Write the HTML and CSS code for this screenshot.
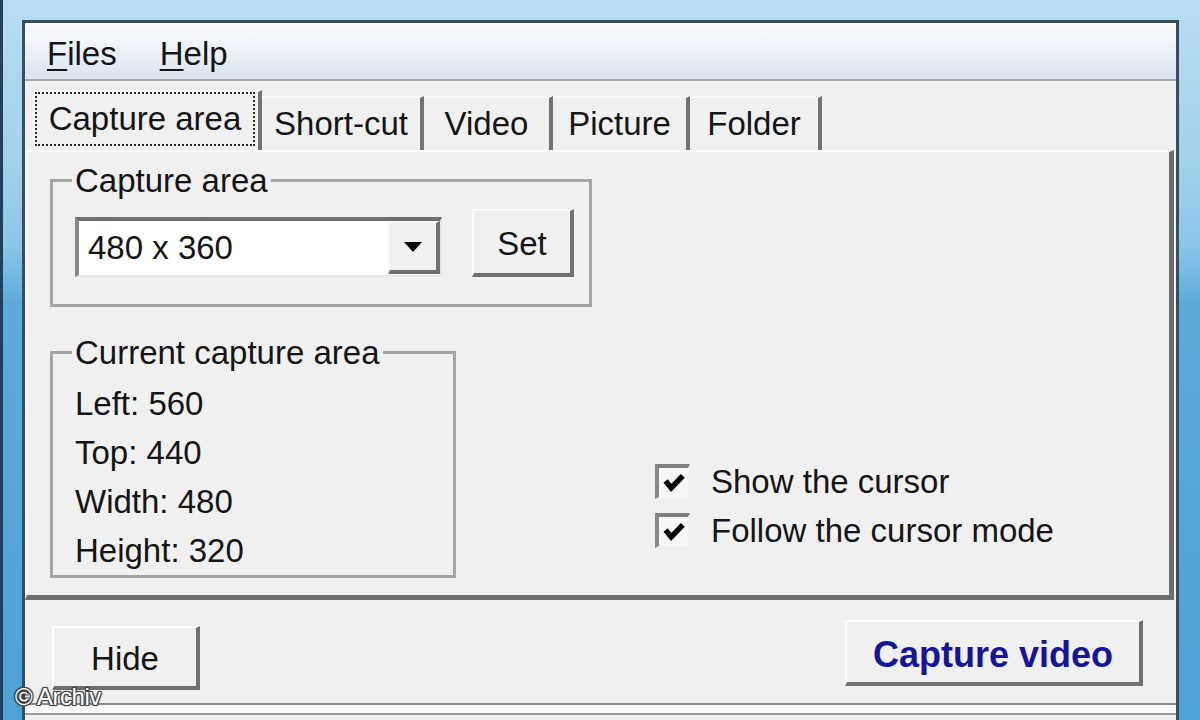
FILE: index.html
```html
<!DOCTYPE html>
<html>
<head>
  <meta charset="UTF-8">
  <title>Capture video</title>
  <link rel="stylesheet" href="styles.css">
</head>
<body>
  <div class="frame">
    <div class="window">
      <!-- 메뉴 -->
      <div class="menubar">
        <span class="menu"><u>F</u>iles</span>
        <span class="menu"><u>H</u>elp</span>
      </div>

      <!-- 탭 -->
      <div class="tabs">
        <div class="tab active"><span class="focus">Capture area</span></div>
        <div class="tab">Short-cut</div>
        <div class="tab">Video</div>
        <div class="tab">Picture</div>
        <div class="tab">Folder</div>
      </div>

      <div class="panel">
        <fieldset class="group group-area">
          <legend>Capture area</legend>
          <div class="area-row">
            <div class="combo">
              <span class="combo-value">480 x 360</span>
              <span class="combo-arrow">
                <svg width="18" height="10" viewBox="0 0 18 10"><path d="M0 0h18L9 10z" fill="#000"/></svg>
              </span>
            </div>
            <button class="btn btn-set">Set</button>
          </div>
        </fieldset>

        <div class="panel-bottom">
          <fieldset class="group group-current">
            <legend>Current capture area</legend>
            <div class="line">Left: 560</div>
            <div class="line">Top: 440</div>
            <div class="line">Width: 480</div>
            <div class="line">Height: 320</div>
          </fieldset>

          <div class="options">
            <label class="check">
              <span class="box"><svg width="28" height="28" viewBox="0 0 13 13"><path d="M2.6 5.6L5.2 8.8L10.6 3.2" fill="none" stroke="#000" stroke-width="2.5"/></svg></span>
              Show the cursor
            </label>
            <label class="check">
              <span class="box"><svg width="28" height="28" viewBox="0 0 13 13"><path d="M2.6 5.6L5.2 8.8L10.6 3.2" fill="none" stroke="#000" stroke-width="2.5"/></svg></span>
              Follow the cursor mode
            </label>
          </div>
        </div>
      </div>

      <div class="actions">
        <button class="btn btn-hide">Hide</button>
        <button class="btn btn-capture">Capture video</button>
      </div>
      <div class="statusbar"></div>
    </div>
    <div class="watermark">© Archiv</div>
  </div>
</body>
</html>
```

FILE: styles.css
```css
/* 전체 */
* {
  box-sizing: border-box;
}

html,
body {
  margin: 0;
}

body {
  width: 1200px;
  height: 720px;
  overflow: hidden;
  font-family: "Liberation Sans", Arial, sans-serif;
  font-size: 33px;
  color: #151515;
  white-space: nowrap;
}

/* 바깥 파란 창틀 */
.frame {
  position: relative;
  height: 720px;
  padding: 20px 21px 0 19px;
  border-left: 3px solid #22405e;
  background: linear-gradient(180deg, #b7ddf1 0%, #a2d2ec 22%, #8cc6e8 34%, #5eabdb 42%, #4fa2d6 100%);
}

.window {
  height: 100%;
  display: flex;
  flex-direction: column;
  background-color: #f0f0f0;
  border: 3px solid #3b4d60;
  border-bottom: none;
}

/* 메뉴 */
.menubar {
  height: 58px;
  flex: none;
  display: flex;
  align-items: center;
  gap: 43px;
  padding: 6px 0 0 22px;
  background: linear-gradient(180deg, #fcfdfe 0%, #eef2f8 45%, #dbe3ef 100%);
  border-bottom: 2px solid #a3abb8;
}

.menu u {
  text-decoration-thickness: 2px;
  text-underline-offset: 4px;
}

/* 탭 */
.tabs {
  height: 69px;
  flex: none;
  display: grid;
  grid-template-columns: 229px 162px 129px 137px 132px;
  align-items: end;
  padding-left: 8px;
}

.tab {
  height: 54px;
  display: flex;
  align-items: center;
  justify-content: center;
  border-top: 2px solid #fbfbfb;
  border-right: 4px solid #727272;
}

.tab.active {
  height: 60px;
  padding: 0 3px 4px 0;
  border-left: 2px solid #fbfbfb;
}

.tab .focus {
  flex: 1;
  height: 100%;
  display: flex;
  align-items: center;
  justify-content: center;
  border: 2px dotted #2a2a2a;
}

/* 탭 패널 */
.panel {
  height: 450px;
  flex: none;
  margin-right: 2px;
  padding: 12px 0 0 23px;
  background-color: #f0f0f0;
  border-top: 2px solid #fdfdfd;
  border-left: 2px solid #fbfbfb;
  border-right: 5px solid #6e6e6e;
  border-bottom: 5px solid #6e6e6e;
}

.group {
  margin: 0;
  border: 3px solid #a6a6a6;
  min-width: 0;
}

.group legend {
  padding: 2px 3px 0;
  margin-left: -3px;
  line-height: 30px;
}

.group-area {
  width: 542px;
  padding: 13px 15px 27px 22px;
}

.area-row {
  display: flex;
  align-items: flex-end;
  gap: 30px;
}

.combo {
  width: 367px;
  height: 60px;
  display: flex;
  background-color: #fff;
  border-style: solid;
  border-width: 4px 2px 2px 4px;
  border-color: #6f6f6f #e6e6e6 #e6e6e6 #8a8a8a;
}

.combo-value {
  flex: 1;
  display: flex;
  align-items: center;
  padding-left: 9px;
}

.combo-arrow {
  width: 52px;
  margin-bottom: 1px;
  display: flex;
  align-items: center;
  justify-content: center;
  background-color: #f0f0f0;
  border-style: solid;
  border-width: 2px 4px 4px 2px;
  border-color: #fafafa #6f6f6f #6f6f6f #fafafa;
}

.panel-bottom {
  display: flex;
  align-items: flex-end;
  margin-top: 29px;
}

.group-current {
  width: 406px;
  padding: 11px 0 0 22px;
}

.line {
  line-height: 49px;
}

/* 체크박스 */
.options {
  margin-left: 199px;
  margin-bottom: 23px;
}

.check {
  height: 49px;
  display: flex;
  align-items: center;
  gap: 21px;
}

.box {
  width: 35px;
  height: 35px;
  display: flex;
  align-items: center;
  justify-content: center;
  background-color: #f7f7f7;
  border-style: solid;
  border-width: 4px 2px 2px 4px;
  border-color: #7f7f7f #f2f2f2 #f2f2f2 #888;
}

/* 버튼 */
.btn {
  padding: 0;
  font: inherit;
  color: #151515;
  background-color: #f0f0f0;
  border-style: solid;
  border-width: 2px 4px 4px 2px;
  border-color: #fcfcfc #6f6f6f #6f6f6f #fcfcfc;
}

.btn-set {
  width: 102px;
  height: 68px;
  padding-top: 3px;
}

.actions {
  height: 103px;
  flex: none;
  display: flex;
  justify-content: space-between;
  align-items: flex-start;
  padding: 20px 33px 0 27px;
}

.btn-hide {
  width: 148px;
  height: 64px;
  margin-top: 6px;
  padding-top: 4px;
}

.btn-capture {
  width: 298px;
  height: 66px;
  padding-top: 5px;
  font-size: 36px;
  font-weight: bold;
  color: #13159a;
}

.statusbar {
  height: 12px;
  flex: none;
  background-color: #fafafa;
  border-top: 2px solid #8d8d8d;
  border-bottom: 2px solid #9c9c9c;
}

/* 워터마크 */
.watermark {
  position: absolute;
  left: 12px;
  bottom: 9px;
  font-size: 24px;
  letter-spacing: -0.5px;
  color: #fff;
  text-shadow: -1px -1px 0 #444, 1px -1px 0 #444, -1px 1px 0 #444, 1px 1px 0 #444, 0 0 3px #000;
}
```
